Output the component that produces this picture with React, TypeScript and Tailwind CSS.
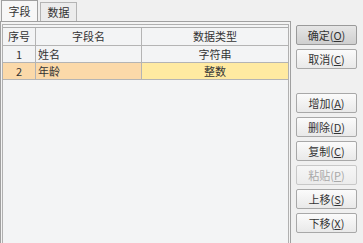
const font = { fontFamily: '"Noto Sans CJK SC", "Noto Sans", sans-serif' };

type Row = { no: number; name: string; type: string; selected?: boolean };

const rows: Row[] = [
    { no: 1, name: "姓名", type: "字符串" },
    { no: 2, name: "年龄", type: "整数", selected: true },
];

function Btn({ label, hot, primary, disabled }: { label: string; hot: string; primary?: boolean; disabled?: boolean }) {
    return (
        <button
            className={`h-[20px] w-[61px] rounded-[2px] border text-[11px] leading-none flex items-center justify-center ${
                primary
                    ? "border-[#9a9a9a] bg-gradient-to-b from-[#e6e6e6] to-[#cfcfcf] text-[#333]"
                    : disabled
                    ? "border-[#c8c8c8] bg-gradient-to-b from-[#f6f6f6] to-[#ececec] text-[#a8a8a8]"
                    : "border-[#a8a8a8] bg-gradient-to-b from-[#fbfbfb] to-[#e9e9e9] text-[#333]"
            }`}
        >
            {label}(<span className="underline underline-offset-1">{hot}</span>)
        </button>
    );
}

export default function App() {
    return (
        <div className="flex h-[243px] w-[363px] overflow-hidden bg-[#f0f0f0] text-[11px] text-[#333]" style={font}>
            <div className="flex w-[291px] flex-col">
                <div className="flex h-[21px] items-end">
                    <div className="ml-[1px] flex h-[21px] w-[37px] items-center justify-center border border-b-0 border-[#a0a0a0] bg-[#f7f7f7]">
                        字段
                    </div>
                    <div className="ml-[2px] flex h-[19px] w-[37px] items-center justify-center border border-b-0 border-[#b4b4b4] bg-[#ececec]">
                        数据
                    </div>
                </div>
                <div className="flex-1 border border-b-0 border-[#a0a0a0] bg-[#f3f3f3] px-[1px] pt-[2px]">
                    <div className="h-full border border-b-0 border-[#b0b0b0] bg-[#f3f4f5] pt-[2px]">
                        <div className="grid grid-cols-[33px_106px_1fr] border-t border-[#adadad]">
                            <div className="flex h-[18px] items-center justify-center border-r border-b border-[#b4b4b4]">序号</div>
                            <div className="flex h-[18px] items-center justify-center border-r border-b border-[#b4b4b4]">字段名</div>
                            <div className="flex h-[18px] items-center justify-center border-b border-[#b4b4b4]">数据类型</div>
                            {rows.map((r) => (
                                <div key={r.no} className="contents">
                                    <div className={`flex h-[17px] items-center justify-center border-r border-b border-[#b4b4b4] ${r.selected ? "bg-[#fbd9a9]" : ""}`}>
                                        {r.no}
                                    </div>
                                    <div className={`flex h-[17px] items-center border-r border-b border-[#b4b4b4] pl-[2px] ${r.selected ? "bg-[#fbd9a9]" : ""}`}>
                                        {r.name}
                                    </div>
                                    <div className={`flex h-[17px] items-center justify-center border-b border-[#b4b4b4] ${r.selected ? "bg-[#ffeaa1]" : ""}`}>
                                        {r.type}
                                    </div>
                                </div>
                            ))}
                        </div>
                    </div>
                </div>
            </div>
            <div className="flex flex-col pl-[5px] pt-[25px]">
                <div className="flex flex-col gap-[4px]">
                    <Btn label="确定" hot="O" primary />
                    <Btn label="取消" hot="C" />
                </div>
                <div className="mt-[24px] flex flex-col gap-[4px]">
                    <Btn label="增加" hot="A" />
                    <Btn label="删除" hot="D" />
                    <Btn label="复制" hot="C" />
                    <Btn label="粘贴" hot="P" disabled />
                    <Btn label="上移" hot="S" />
                    <Btn label="下移" hot="X" />
                </div>
            </div>
        </div>
    );
}
